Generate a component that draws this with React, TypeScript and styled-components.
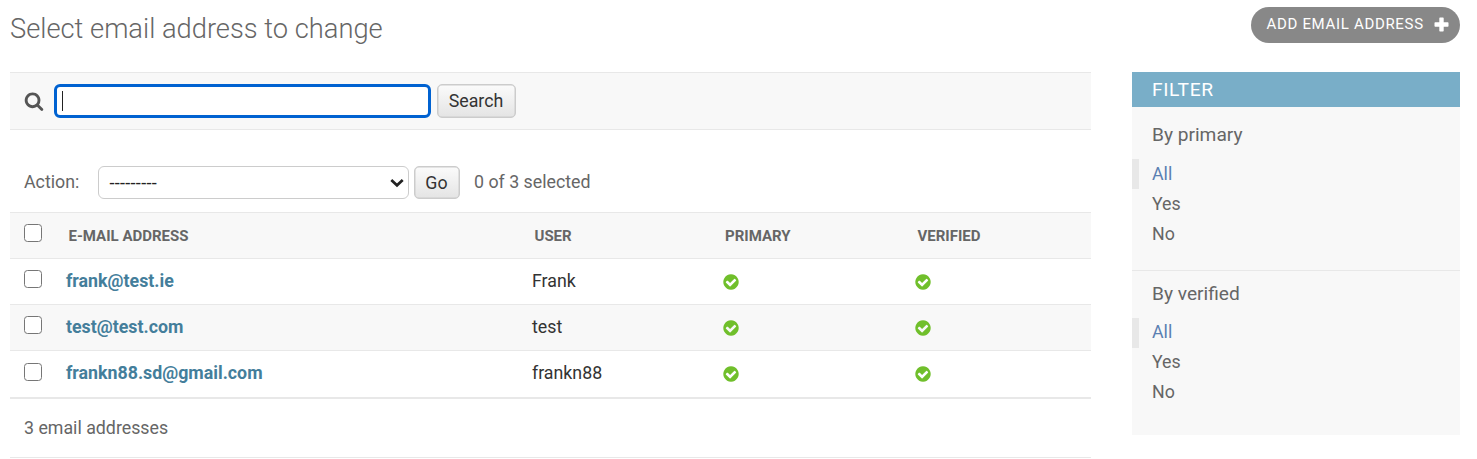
import React from "react";
import styled, { createGlobalStyle } from "styled-components";

const GlobalStyle = createGlobalStyle`
  * { box-sizing: border-box; }
  body {
    margin: 0;
    background: #fff;
    color: #666;
    font-family: Roboto, "Liberation Sans", sans-serif;
    font-size: 17.8px;
    overflow: hidden;
  }
`;

const Page = styled.div`
  height: 459px;
  padding: 0 17px 0 10px;
  display: flex;
  flex-direction: column;
  overflow: hidden;
`;

const Header = styled.header`
  height: 72px;
  flex: none;
  display: flex;
  justify-content: space-between;
  align-items: flex-start;
`;

const Title = styled.h1`
  margin: 12px 0 0;
  font-size: 27.3px;
  line-height: 34px;
  font-weight: 300;
  white-space: nowrap;
`;

const AddLink = styled.a`
  margin-top: 7px;
  width: 209px;
  height: 36px;
  padding: 0 11px 1px 15.5px;
  border-radius: 18px;
  background: #888;
  color: #fff;
  display: flex;
  align-items: center;
  justify-content: space-between;
  font-size: 15px;
  letter-spacing: 0.68px;
  white-space: nowrap;
`;

const AddText = styled.span`
  padding-bottom: 1px;
`;

const Columns = styled.div`
  display: flex;
  align-items: flex-start;
  gap: 41px;
`;

const ChangeList = styled.main`
  width: 1081px;
`;

const Toolbar = styled.form`
  height: 58px;
  padding: 0 14px;
  display: flex;
  align-items: center;
  background: #f8f8f8;
  border-top: 1px solid #e8e8e8;
  border-bottom: 1px solid #e8e8e8;
`;

const SearchField = styled.div`
  width: 377px;
  height: 34px;
  margin: 0 5.5px 0 10px;
  padding: 0 6px;
  display: flex;
  align-items: center;
  border: 3px solid #0062d1;
  border-radius: 6px;
  background: #fff;
`;

const Caret = styled.span`
  width: 1px;
  height: 20px;
  margin-left: -1px;
  background: #222;
`;

const Button = styled.button<{ $width: number; $height: number }>`
  width: ${(p) => p.$width}px;
  height: ${(p) => p.$height}px;
  padding: 0;
  border: 1px solid #ccc;
  border-radius: 5px;
  background: linear-gradient(#fbfbfb, #e4e4e4);
  box-shadow: inset 0 0 0 0.5px #ccc;
  color: #333;
  font: 400 17.8px/20px Roboto, sans-serif;
`;

const Actions = styled.div`
  height: 82px;
  padding: 23px 14px 0;
  display: flex;
  align-items: center;
  white-space: nowrap;
`;

const ActionLabel = styled.label`
  width: 74px;
  padding-bottom: 2px;
`;

const Select = styled.div`
  width: 311px;
  height: 33px;
  margin-right: 4.5px;
  padding: 0 4px 0 10.5px;
  display: flex;
  align-items: center;
  justify-content: space-between;
  border: 1.5px solid #ccc;
  border-radius: 6px;
  color: #222;
`;

const Dashes = styled.span`
  font-size: 18px;
  letter-spacing: 0.3px;
`;

const Counter = styled.span`
  margin-left: 14.5px;
  padding-bottom: 2px;
`;

const Row = styled.div<{ $height: number; $shaded?: boolean }>`
  height: ${(p) => p.$height}px;
  display: grid;
  grid-template-columns: 56px 466px 190.5px 192.5px 1fr;
  align-items: center;
  border-top: 1px solid #e8e8e8;
  background: ${(p) => (p.$shaded ? "#f8f8f8" : "#fff")};
  color: #333;
`;

const HeadCell = styled.div`
  padding-left: 2.5px;
  color: #666;
  font-size: 15px;
  font-weight: 700;
`;

const Cell = styled.div<{ $lift?: number }>`
  padding-bottom: ${(p) => p.$lift ?? 2}px;
  display: flex;
  align-items: center;
`;

const IconCell = styled.div`
  display: flex;
  align-items: center;
  margin-left: -0.7px;
`;

const EmailLink = styled.a`
  color: #447e9b;
  font-weight: 700;
`;

const Checkbox = styled.span`
  width: 18px;
  height: 18px;
  margin: -5px 0 0 14px;
  border: 1.5px solid #767676;
  border-radius: 3.5px;
  background: #fff;
`;

const Paginator = styled.p`
  height: 61px;
  margin: 0;
  padding: 0 14px 1px;
  display: flex;
  align-items: center;
  border-top: 2px solid #e8e8e8;
  border-bottom: 1px solid #e8e8e8;
`;

const FilterPanel = styled.aside`
  width: 328px;
  height: 363px;
  background: #f8f8f8;
`;

const FilterTitle = styled.h2`
  height: 35px;
  margin: 0;
  padding-left: 20px;
  background: #79aec8;
  color: #fff;
  font-size: 19.2px;
  line-height: 36px;
  font-weight: 400;
  letter-spacing: 0.65px;
`;

const FilterHeading = styled.h3`
  height: 52px;
  margin: 0;
  padding: 12px 20px 0;
  font-size: 19.15px;
  line-height: 31px;
  font-weight: 400;
`;

const Choice = styled.a<{ $selected?: boolean }>`
  height: 30px;
  padding: 0 0 2px ${(p) => (p.$selected ? 13 : 20)}px;
  display: flex;
  align-items: center;
  border-left: ${(p) => (p.$selected ? "7px solid #e8e8e8" : "0")};
  color: ${(p) => (p.$selected ? "#5b80b2" : "#666")};
`;

const FilterGroup = styled.section`
  height: 163px;

  & + & {
    height: 158px;
    border-top: 1px solid #e8e8e8;
  }
  & + & ${FilterHeading} {
    padding-top: 7px;
    height: 47px;
  }
  & + & ${Choice} {
    padding-bottom: 3px;
  }
`;

const SearchIcon = () => (
  <svg width="20" height="20" viewBox="0 0 1792 1792" fill="#555">
    <path d="M1216 832q0-185-131.500-316.500t-316.500-131.500-316.500 131.500-131.500 316.500 131.500 316.500 316.500 131.500 316.500-131.500 131.500-316.500zm512 832q0 52-38 90t-90 38q-54 0-90-38l-343-342q-179 124-399 124-143 0-273.500-55.500t-225-150-150-225-55.500-273.500 55.500-273.500 150-225 225-150 273.500-55.500 273.500 55.500 225 150 150 225 55.500 273.500q0 220-124 399l343 343q37 37 37 90z" />
  </svg>
);

const PlusIcon = () => (
  <svg width="15" height="15" viewBox="0 0 15 15" fill="#fff">
    <path d="M6 .5h3q.7 0 .7.7v4.100h4.100q.7 0 .7.7v3q0 .7-.7.7H9.700v4.100q0 .7-.7.7H6q-.7 0-.7-.7V9.700H1.200q-.7 0-.7-.7V6q0-.7.7-.7h4.100V1.200q0-.7.7-.7z" />
  </svg>
);

const ArrowIcon = () => (
  <svg width="14" height="10" viewBox="0 0 14 10" fill="none" stroke="#222" strokeWidth="2.700">
    <path d="M1.300 2 7 7.300 12.700 2" />
  </svg>
);

const YesIcon = () => (
  <svg width="18" height="18" viewBox="0 0 1792 1792" fill="#70bf2b">
    <path d="M1412 734q0-28-18-46l-91-90q-19-19-45-19t-45 19l-408 407-226-226q-19-19-45-19t-45 19l-91 90q-18 18-18 46 0 27 18 45l362 362q19 19 45 19 27 0 46-19l543-543q18-18 18-45zm252 162q0 209-103 385.500t-279.500 279.500-385.500 103-385.500-103-279.500-279.500-103-385.500 103-385.500 279.500-279.500 385.500-103 385.500 103 279.500 279.500 103 385.500z" />
  </svg>
);

const records = [
  { email: "frank@test.ie", user: "Frank", height: 46, lift: 2 },
  { email: "test@test.com", user: "test", height: 46, lift: 2 },
  { email: "frankn88.sd@gmail.com", user: "frankn88", height: 47, lift: 4 },
];

const Filter = ({ label }: { label: string }) => (
  <FilterGroup>
    <FilterHeading>{label}</FilterHeading>
    <Choice $selected>All</Choice>
    <Choice>Yes</Choice>
    <Choice>No</Choice>
  </FilterGroup>
);

export default function App() {
  return (
    <Page>
      <GlobalStyle />
      <Header>
        <Title>Select email address to change</Title>
        <AddLink>
          <AddText>ADD EMAIL ADDRESS</AddText>
          <PlusIcon />
        </AddLink>
      </Header>
      <Columns>
        <ChangeList>
          <Toolbar>
            <SearchIcon />
            <SearchField>
              <Caret />
            </SearchField>
            <Button type="button" $width={79} $height={34}>Search</Button>
          </Toolbar>
          <Actions>
            <ActionLabel>Action:</ActionLabel>
            <Select>
              <Dashes>---------</Dashes>
              <ArrowIcon />
            </Select>
            <Button type="button" $width={46} $height={33}>Go</Button>
            <Counter>0 of 3 selected</Counter>
          </Actions>
          <Row $height={46} $shaded>
            <Checkbox />
            <HeadCell>E-MAIL ADDRESS</HeadCell>
            <HeadCell>USER</HeadCell>
            <HeadCell>PRIMARY</HeadCell>
            <HeadCell>VERIFIED</HeadCell>
          </Row>
          {records.map((r, i) => (
            <Row key={r.email} $height={r.height} $shaded={i % 2 === 1}>
              <Checkbox />
              <Cell $lift={r.lift}><EmailLink>{r.email}</EmailLink></Cell>
              <Cell $lift={r.lift}>{r.user}</Cell>
              <IconCell><YesIcon /></IconCell>
              <IconCell><YesIcon /></IconCell>
            </Row>
          ))}
          <Paginator>3 email addresses</Paginator>
        </ChangeList>
        <FilterPanel>
          <FilterTitle>FILTER</FilterTitle>
          <Filter label="By primary" />
          <Filter label="By verified" />
        </FilterPanel>
      </Columns>
    </Page>
  );
}
